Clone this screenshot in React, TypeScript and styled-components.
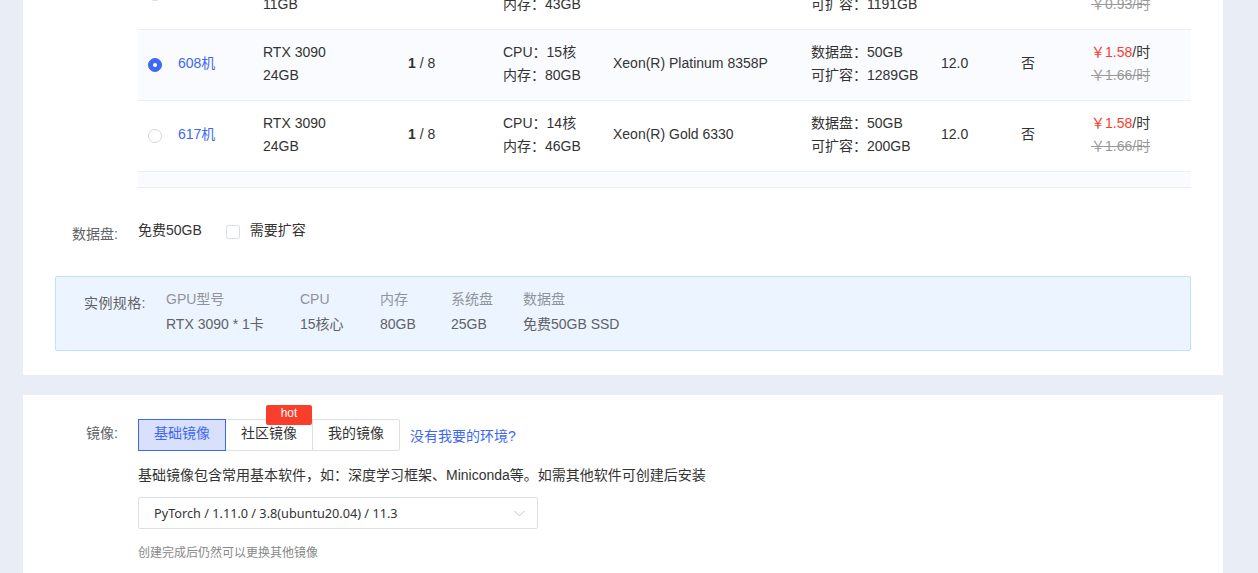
import React from "react";
import styled, { createGlobalStyle } from "styled-components";

const Global = createGlobalStyle`
  html, body { margin: 0; padding: 0; height: 573px; overflow: hidden; background: #e9edf5; }
  body { font-family: "Liberation Sans", "Noto Sans CJK SC", sans-serif; font-size: 14px; color: #333; }
  * { box-sizing: border-box; }
`;
const Page = styled.div`
  padding: 0 35px 0 23px;
  display: flex;
  flex-direction: column;
  gap: 20px;
`;
const Card = styled.section<{ $scrolled?: boolean }>`
  background: #fff;
  padding: 0 32px;
  margin-top: ${(p) => (p.$scrolled ? "-41px" : "0")};
  height: ${(p) => (p.$scrolled ? "416px" : "220px")};
`;
const Table = styled.div`
  margin-left: 83px;
  border-bottom: 1px solid #ebeef5;
`;
const Row = styled.div<{ $selected?: boolean }>`
  display: grid;
  grid-template-columns: 40px 85px 145px 95px 110px 198px 130px 80px 70px 1fr;
  align-items: center;
  height: 71px;
  padding-bottom: 2px;
  border-bottom: 1px solid #ebeef5;
  background: ${(p) => (p.$selected ? "#fafbfe" : "#fff")};
  line-height: 23px;
`;
const SingleLine = styled.div`
  margin-bottom: 1px;
`;
const TableFooter = styled.div`
  height: 15px;
  background: #fafbfe;
`;
const Radio = styled.span<{ $on?: boolean }>`
  display: block;
  width: 14px;
  height: 14px;
  margin: 2px 0 0 10px;
  border-radius: 50%;
  border: 1px solid ${(p) => (p.$on ? "#3d68f5" : "#d5d8df")};
  background: ${(p) => (p.$on ? "#3d68f5" : "#fff")};
  position: relative;
  &::after {
    content: "";
    display: ${(p) => (p.$on ? "block" : "none")};
    position: absolute;
    left: 4px;
    top: 4px;
    width: 4px;
    height: 4px;
    border-radius: 50%;
    background: #fff;
  }
`;
const Name = styled(SingleLine)`
  color: #3d68f5;
`;
const Strong = styled.b`
  font-weight: 700;
`;
const Now = styled.div`
  color: #f93c2c;
  & > span { color: #333; }
`;
const Old = styled.div`
  color: #999;
  text-decoration: line-through;
`;
const FormRow = styled.div`
  display: flex;
  align-items: flex-start;
`;
const Label = styled.label`
  width: 83px;
  padding-right: 20px;
  text-align: right;
  color: #606266;
  flex: none;
`;
const DiskRow = styled(FormRow)`
  margin-top: 34px;
  height: 54px;
  line-height: 16px;
  ${Label} { padding-top: 4px; }
`;
const Check = styled.span`
  width: 14px;
  height: 14px;
  margin: 3px 10px 0 24px;
  border: 1px solid #dcdfe6;
  border-radius: 2px;
  background: #fff;
`;
const Spec = styled.div`
  height: 75px;
  display: flex;
  padding: 10px 0 0 28px;
  background: #ecf5ff;
  border: 1px solid #c0e0fb;
  border-radius: 2px;
  color: #606266;
  line-height: 25px;
`;
const SpecTitle = styled.div`
  width: 82px;
  padding-top: 4px;
  flex: none;
  letter-spacing: 0.4px;
`;
const SpecCol = styled.div<{ $w: number }>`
  width: ${(p) => p.$w}px;
  flex: none;
  & > div:first-child { color: #909399; }
`;
const MirrorRow = styled(FormRow)`
  padding-top: 24px;
  ${Label} { padding-top: 6px; line-height: 16px; }
`;
const MirrorBody = styled.div`
  display: flex;
  flex-direction: column;
`;
const Tabs = styled.div`
  display: flex;
  align-items: center;
  height: 32px;
`;
const Tab = styled.button<{ $on?: boolean }>`
  position: relative;
  width: 88px;
  height: 32px;
  margin-left: ${(p) => (p.$on ? "0" : "-1px")};
  padding: 0 0 7px;
  font: inherit;
  background: ${(p) => (p.$on ? "#d8e0fb" : "#fff")};
  color: ${(p) => (p.$on ? "#3d68f5" : "#333")};
  border: 1px solid ${(p) => (p.$on ? "#3d68f5" : "#dcdfe6")};
  z-index: ${(p) => (p.$on ? 1 : 0)};
  &:last-of-type { border-radius: 0 2px 2px 0; }
`;
const Hot = styled.span`
  position: absolute;
  top: -15px;
  left: 40px;
  width: 46px;
  height: 20px;
  background: #fa3e2c;
  color: #fff;
  font-size: 12px;
  line-height: 16px;
  border-radius: 2px;
  text-align: center;
  z-index: 2;
`;
const Help = styled.a`
  margin: 0 0 0 10px;
  color: #3d68f5;
`;
const Desc = styled.div`
  margin-top: 14px;
  line-height: 20px;
  color: #333;
`;
const Select = styled.div`
  margin-top: 12px;
  width: 400px;
  height: 32px;
  padding: 0 12px 0 15px;
  display: flex;
  align-items: center;
  justify-content: space-between;
  border: 1px solid #dcdfe6;
  border-radius: 2px;
  font-family: "Noto Sans", "Noto Sans CJK SC", sans-serif;
  font-size: 12.7px;
  color: #333;
`;
const Hint = styled.div`
  margin-top: 16px;
  font-size: 12px;
  line-height: 17px;
  color: #888;
`;

type Machine = {
  name: string; gpu: string; mem: string; cores: string; ram: string; model: string;
  disk: string; grow: string; price: string; old: string; selected?: boolean;
};
const machines: Machine[] = [
  { name: "605机", gpu: "RTX 2080 Ti", mem: "11GB", cores: "8", ram: "43GB", model: "Xeon(R) Gold 6130", disk: "50GB", grow: "1191GB", price: "0.88", old: "0.93" },
  { name: "608机", gpu: "RTX 3090", mem: "24GB", cores: "15", ram: "80GB", model: "Xeon(R) Platinum 8358P", disk: "50GB", grow: "1289GB", price: "1.58", old: "1.66", selected: true },
  { name: "617机", gpu: "RTX 3090", mem: "24GB", cores: "14", ram: "46GB", model: "Xeon(R) Gold 6330", disk: "50GB", grow: "200GB", price: "1.58", old: "1.66" },
];
const specs = [
  { w: 134, h: "GPU型号", v: "RTX 3090 * 1卡" },
  { w: 80, h: "CPU", v: "15核心" },
  { w: 71, h: "内存", v: "80GB" },
  { w: 72, h: "系统盘", v: "25GB" },
  { w: 200, h: "数据盘", v: "免费50GB SSD" },
];

export default function App() {
  return (
    <Page>
      <Global />
      <Card $scrolled>
        <Table>
          {machines.map((m) => (
            <Row key={m.name} $selected={m.selected}>
              <Radio $on={m.selected} />
              <Name>{m.name}</Name>
              <div>{m.gpu}<br />{m.mem}</div>
              <SingleLine><Strong>1</Strong> / 8</SingleLine>
              <div>CPU：{m.cores}核<br />内存：{m.ram}</div>
              <SingleLine>{m.model}</SingleLine>
              <div>数据盘：{m.disk}<br />可扩容：{m.grow}</div>
              <SingleLine>12.0</SingleLine>
              <SingleLine>否</SingleLine>
              <div>
                <Now>￥{m.price}<span>/时</span></Now>
                <Old>￥{m.old}/时</Old>
              </div>
            </Row>
          ))}
          <TableFooter />
        </Table>
        <DiskRow>
          <Label>数据盘:</Label>
          <span>免费50GB</span>
          <Check />
          <span>需要扩容</span>
        </DiskRow>
        <Spec>
          <SpecTitle>实例规格:</SpecTitle>
          {specs.map((s) => (
            <SpecCol key={s.h} $w={s.w}>
              <div>{s.h}</div>
              <div>{s.v}</div>
            </SpecCol>
          ))}
        </Spec>
      </Card>
      <Card>
        <MirrorRow>
          <Label>镜像:</Label>
          <MirrorBody>
            <Tabs>
              <Tab $on>基础镜像</Tab>
              <Tab>社区镜像<Hot>hot</Hot></Tab>
              <Tab>我的镜像</Tab>
              <Help>没有我要的环境?</Help>
            </Tabs>
            <Desc>基础镜像包含常用基本软件，如：深度学习框架、Miniconda等。如需其他软件可创建后安装</Desc>
            <Select>
              <span>PyTorch / 1.11.0 / 3.8(ubuntu20.04) / 11.3</span>
              <svg width="11" height="7" viewBox="0 0 11 7" fill="none" stroke="#c0c4cc" strokeWidth="1">
                <path d="M0.5 1 L5.5 6 L10.5 1" />
              </svg>
            </Select>
            <Hint>创建完成后仍然可以更换其他镜像</Hint>
          </MirrorBody>
        </MirrorRow>
      </Card>
    </Page>
  );
}
